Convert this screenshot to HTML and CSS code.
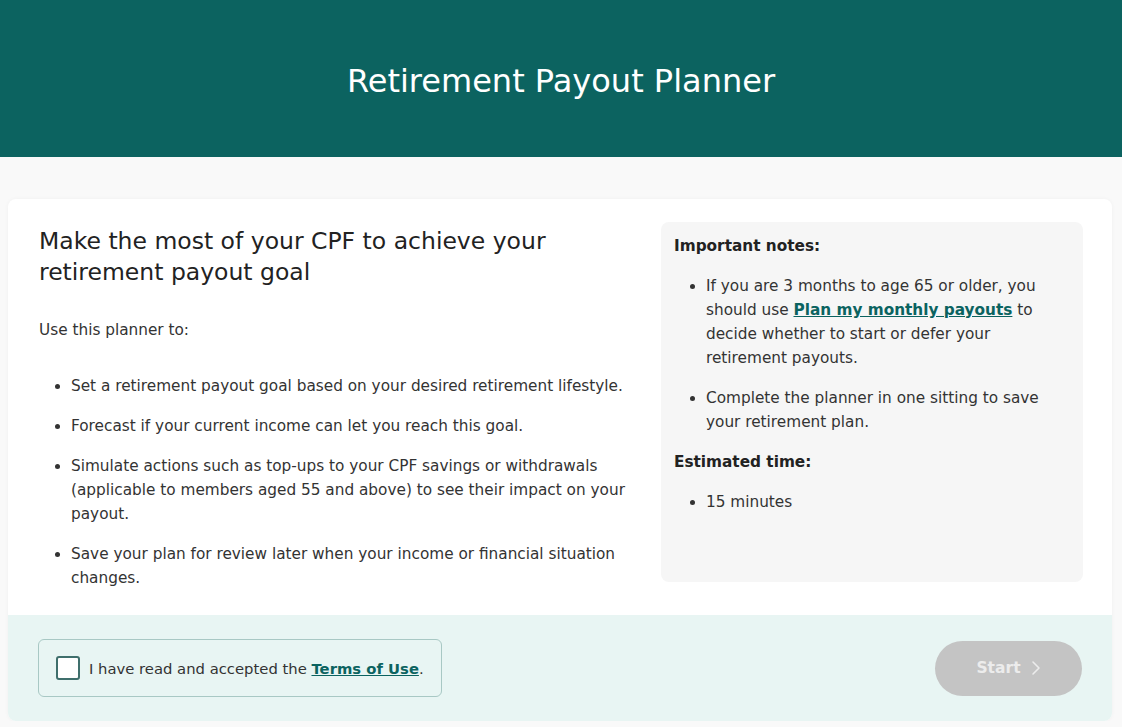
FILE: index.html
```html
<!DOCTYPE html>
<html lang="en">
<head>
    <meta charset="UTF-8">
    <meta name="viewport" content="width=device-width, initial-scale=1.0">
    <title>Retirement Payout Planner</title>
    <link rel="stylesheet" href="styles.css">
</head>
<body>
    <header class="page-header">
        <h1>Retirement Payout Planner</h1>
    </header>

    <main class="card">
        <div class="card-body">
            <section class="intro">
                <h2>Make the most of your CPF to achieve your retirement payout goal</h2>
                <p>Use this planner to:</p>
                <ul>
                    <li>Set a retirement payout goal based on your desired retirement lifestyle.</li>
                    <li>Forecast if your current income can let you reach this goal.</li>
                    <li>Simulate actions such as top-ups to your CPF savings or withdrawals (applicable to members aged 55 and above) to see their impact on your payout.</li>
                    <li>Save your plan for review later when your income or financial situation changes.</li>
                </ul>
            </section>

            <aside class="notes">
                <h3>Important notes:</h3>
                <ul>
                    <li>If you are 3 months to age 65 or older, you should use <a href="#">Plan my monthly payouts</a> to decide whether to start or defer your retirement payouts.</li>
                    <li>Complete the planner in one sitting to save your retirement plan.</li>
                </ul>
                <h3>Estimated time:</h3>
                <ul>
                    <li>15 minutes</li>
                </ul>
            </aside>
        </div>

        <div class="card-footer">
            <label class="terms">
                <input type="checkbox" id="acceptTerms">
                <span class="box"></span>
                <span>I have read and accepted the <a href="#">Terms of Use</a>.</span>
            </label>
            <button class="start" id="startBtn" disabled>
                Start
                <svg width="10" height="16" viewBox="0 0 10 16"><path d="M2 2l6 6-6 6" fill="none" stroke="currentColor" stroke-width="1.6" stroke-linecap="round" stroke-linejoin="round"/></svg>
            </button>
        </div>
    </main>

    <script>
        const acceptTerms = document.getElementById('acceptTerms');
        const startBtn = document.getElementById('startBtn');

        acceptTerms.addEventListener('change', () => {
            startBtn.disabled = !acceptTerms.checked;
        });
    </script>
</body>
</html>
```

FILE: styles.css
```css
body {
    font-family: "DejaVu Sans", "Open Sans", sans-serif;
    margin: 0;
    padding: 0;
    background-color: #f9f9f9;
    color: #333;
}

a {
    color: #0b6360;
    font-weight: bold;
}

.page-header {
    background-color: #0c6360;
    color: white;
    height: 157px;
    display: flex;
    align-items: center;
    justify-content: center;
}

.page-header h1 {
    margin: 4px 0 0;
    font-size: 32px;
    font-weight: 500;
}

.card {
    margin: 42px 10px 0 8px;
    background-color: white;
    border-radius: 8px;
    overflow: hidden;
    box-shadow: 0 0 4px rgba(0, 0, 0, 0.04);
}

.card-body {
    display: grid;
    grid-template-columns: 1fr 422px;
    gap: 30px;
    padding: 23px 29px 25px 31px;
}

.intro h2 {
    margin: 4px 0 0;
    font-size: 23.5px;
    font-weight: 500;
    line-height: 31px;
    color: #222;
    max-width: 560px;
}

.intro p {
    margin: 30px 0 0;
    font-size: 15.3px;
    line-height: 24px;
}

.intro ul {
    margin: 32px 0 0;
    padding-left: 32px;
    font-size: 15.3px;
    line-height: 24px;
}

.intro li {
    margin-bottom: 16px;
}

.intro li:last-child {
    margin-bottom: 0;
}

.notes {
    align-self: start;
    box-sizing: border-box;
    min-height: 360px;
    background-color: #f6f6f6;
    border-radius: 8px;
    padding: 12px 13px 20px;
    font-size: 15.3px;
    line-height: 24px;
}

.notes h3 {
    margin: 0;
    font-size: 15.3px;
    font-weight: bold;
    color: #222;
}

.notes ul {
    margin: 16px 0 16px;
    padding-left: 32px;
}

.notes li {
    margin-bottom: 16px;
}

.notes li:last-child {
    margin-bottom: 0;
}

.card-footer {
    background-color: #e8f5f3;
    display: flex;
    align-items: center;
    justify-content: space-between;
    padding: 24px 30px 24px 30px;
}

.terms {
    display: flex;
    align-items: center;
    gap: 9px;
    border: 1px solid #a8c8c4;
    border-radius: 6px;
    padding: 16px 17px 16px 17px;
    font-size: 14.8px;
    white-space: nowrap;
    cursor: pointer;
}

.terms input {
    display: none;
}

.terms .box {
    width: 20px;
    height: 20px;
    border: 2px solid #3f6f6c;
    border-radius: 3px;
    background-color: white;
    flex-shrink: 0;
}

.terms input:checked + .box {
    background-color: #0c6360;
}

.start {
    width: 147px;
    height: 55px;
    border: none;
    border-radius: 28px;
    background-color: #c4c4c4;
    color: #ececec;
    font-family: inherit;
    font-size: 15.5px;
    font-weight: bold;
    display: flex;
    align-items: center;
    justify-content: center;
    gap: 10px;
    cursor: pointer;
}

.start:disabled {
    cursor: default;
}

.start:not(:disabled) {
    background-color: #0c6360;
    color: white;
}
```
